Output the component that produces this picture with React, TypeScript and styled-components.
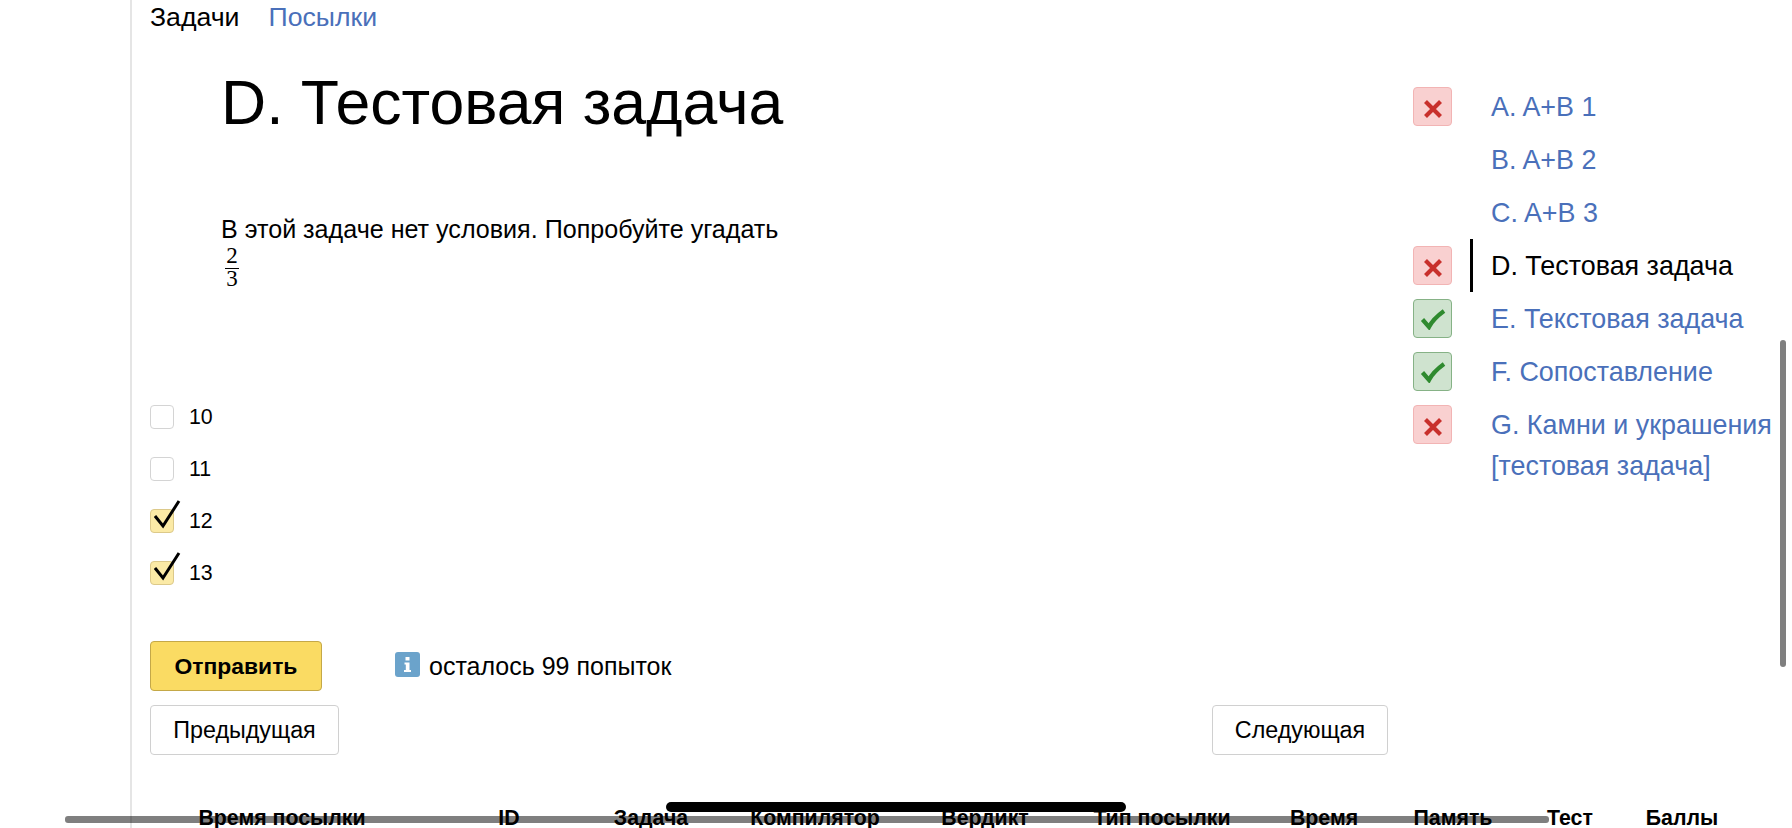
import styled, { createGlobalStyle } from "styled-components";

const Global = createGlobalStyle`
    html, body {
        margin: 0;
        background: #fff;
        color: #000;
        font-family: "Liberation Sans", Arial, sans-serif;
    }
`;

const Palette = {
    link: "#4a70ba",
    divider: "#e5e5e5",
    yellow: "#fadb63",
};

const Page = styled.div`
    position: relative;
    width: 1792px;
    height: 828px;
    overflow: hidden;
    box-sizing: border-box;
    padding-left: 130px;
`;

const Main = styled.div`
    height: 100%;
    border-left: 2px solid ${Palette.divider};
    padding-left: 18px;
    box-sizing: border-box;
`;

const Tabs = styled.nav`
    display: flex;
    gap: 29px;
    height: 34px;
    align-items: center;
    font-size: 26.67px;
`;

const Tab = styled.span<{ $active?: boolean }>`
    color: ${(p) => (p.$active ? "#000" : Palette.link)};
`;

const Content = styled.div`
    display: flex;
`;

const Left = styled.div`
    width: 1238px;
`;

const Title = styled.h1`
    margin: 31px 0 0 71px;
    font-size: 62.5px;
    line-height: 74px;
    font-weight: 400;
`;

const Statement = styled.div`
    margin: 76px 0 0 71px;
    font-size: 25.1px;
    line-height: 28px;
`;

const Fraction = styled.div`
    width: 14px;
    margin: 3px 0 0 4px;
    display: flex;
    flex-direction: column;
    align-items: center;
    font-family: "Liberation Serif", serif;
    font-size: 23px;
    line-height: 20px;
`;

const Numerator = styled.span`
    width: 100%;
    text-align: center;
    border-bottom: 1px solid #000;
    padding-bottom: 2px;
`;

const Options = styled.div`
    margin-top: 114px;
    display: flex;
    flex-direction: column;
    gap: 24px;
`;

const Option = styled.label`
    display: flex;
    align-items: center;
    gap: 15px;
    height: 28px;
    font-size: 21.33px;
`;

const Box = styled.span<{ $checked?: boolean }>`
    position: relative;
    width: 24px;
    height: 24px;
    box-sizing: border-box;
    border-radius: 4px;
    border: 1px solid ${(p) => (p.$checked ? "#dcc98a" : "#d4d4d4")};
    background: ${(p) => (p.$checked ? "#fbeaa6" : "#fff")};
`;

const Tick = styled.svg`
    position: absolute;
    left: 3px;
    top: -11px;
`;

const Actions = styled.div`
    margin-top: 54px;
    display: flex;
    align-items: center;
`;

const Submit = styled.button`
    width: 172px;
    height: 50px;
    padding: 0;
    border: 1px solid #c4a848;
    border-radius: 4px;
    background: ${Palette.yellow};
    color: #000;
    font: 700 22.86px "Liberation Sans", Arial, sans-serif;
`;

const Hint = styled.div`
    display: flex;
    align-items: center;
    gap: 9px;
    margin-left: 73px;
    font-size: 25px;
`;

const InfoIcon = styled.svg`
    display: block;
    margin-top: -3px;
`;

const Pager = styled.div`
    margin-top: 14px;
    display: flex;
    justify-content: space-between;
`;

const PagerButton = styled.button<{ $width: number }>`
    width: ${(p) => p.$width}px;
    height: 50px;
    padding: 0;
    background: #fff;
    color: #000;
    border: 1px solid #d0d0d0;
    border-radius: 4px;
    font: 400 23.3px "Liberation Sans", Arial, sans-serif;
`;

const Sidebar = styled.ul`
    list-style: none;
    margin: 46px 0 0 25px;
    padding: 0;
    width: 379px;
`;

const Problem = styled.li`
    display: flex;
`;

const StatusSlot = styled.div`
    flex: 0 0 39px;
    height: 53px;
    display: flex;
    align-items: center;
`;

const Status = styled.span<{ $ok: boolean }>`
    width: 39px;
    height: 39px;
    box-sizing: border-box;
    display: flex;
    align-items: center;
    justify-content: center;
    border-radius: 4px;
    border: 1px solid ${(p) => (p.$ok ? "#86b286" : "#f2b4b4")};
    background: ${(p) => (p.$ok ? "#cfe3cf" : "#f9d0d0")};
`;

const ProblemName = styled.div<{ $current?: boolean }>`
    margin-left: 18px;
    padding: 7px 0 5px 18px;
    border-left: 3px solid ${(p) => (p.$current ? "#000" : "transparent")};
    font-size: 26.9px;
    line-height: 41px;
    color: ${(p) => (p.$current ? "#000" : Palette.link)};
`;

const TableHead = styled.div`
    display: grid;
    grid-template-columns: 264px 190px 94px 234px 106px 248px 76px 182px 52px 172px;
    margin-top: 50px;
    font-size: 21.33px;
    font-weight: 700;
    line-height: 26px;
    text-align: center;
`;

const ScrollThumb = styled.div`
    position: absolute;
    background: rgba(0, 0, 0, 0.5);
    border-radius: 3px;
`;

const VerticalThumb = styled(ScrollThumb)`
    left: 1780px;
    top: 340px;
    width: 6px;
    height: 327px;
`;

const HorizontalThumb = styled(ScrollThumb)`
    left: 65px;
    top: 816px;
    width: 1484px;
    height: 7px;
`;

const HomeBar = styled.div`
    position: absolute;
    left: 666px;
    top: 802px;
    width: 460px;
    height: 10px;
    border-radius: 5px;
    background: #000;
`;

const problems = [
    { name: "A. A+B 1", status: "fail" },
    { name: "B. A+B 2" },
    { name: "C. A+B 3" },
    { name: "D. Тестовая задача", status: "fail", current: true },
    { name: "E. Текстовая задача", status: "ok" },
    { name: "F. Сопоставление", status: "ok" },
    { name: "G. Камни и украшения [тестовая задача]", status: "fail" },
];

const options = [
    { label: "10", checked: false },
    { label: "11", checked: false },
    { label: "12", checked: true },
    { label: "13", checked: true },
];

const columns = ["Время посылки", "ID", "Задача", "Компилятор", "Вердикт", "Тип посылки", "Время", "Память", "Тест", "Баллы"];

const StatusMark = ({ ok }: { ok: boolean }) => (
    <Status $ok={ok}>
        {ok ? (
            <svg width="26" height="22" viewBox="0 0 26 22">
                <path d="M2.5 11.5 L9 19 Q13 11 24 3" fill="none" stroke="#2f8a2f" strokeWidth="4.2" />
            </svg>
        ) : (
            <svg width="20" height="24" viewBox="0 0 20 24">
                <path d="M2.5 6.5 L17.5 21.5 M17.5 6.5 L2.5 21.5" fill="none" stroke="#c8302c" strokeWidth="4.2" />
            </svg>
        )}
    </Status>
);

export default function App() {
    return (
        <Page>
            <Global />
            <Main>
                <Tabs>
                    <Tab $active>Задачи</Tab>
                    <Tab>Посылки</Tab>
                </Tabs>
                <Content>
                    <Left>
                        <Title>D. Тестовая задача</Title>
                        <Statement>
                            В этой задаче нет условия. Попробуйте угадать
                            <Fraction>
                                <Numerator>2</Numerator>
                                <span>3</span>
                            </Fraction>
                        </Statement>
                        <Options>
                            {options.map((o) => (
                                <Option key={o.label}>
                                    <Box $checked={o.checked}>
                                        {o.checked && (
                                            <Tick width="28" height="32" viewBox="0 0 28 32">
                                                <path d="M1 17 L9 27 L25 2" fill="none" stroke="#000" strokeWidth="3" />
                                            </Tick>
                                        )}
                                    </Box>
                                    {o.label}
                                </Option>
                            ))}
                        </Options>
                        <Actions>
                            <Submit>Отправить</Submit>
                            <Hint>
                                <InfoIcon width="25" height="25" viewBox="0 0 25 25">
                                    <rect width="25" height="25" rx="3" fill="#6ba3cb" />
                                    <rect x="10.5" y="5" width="4" height="3.5" fill="#fff" />
                                    <path d="M9.5 10.5 H14.5 V18 H16 V20 H9 V18 H10.8 V12.5 H9.5 Z" fill="#fff" />
                                </InfoIcon>
                                осталось 99 попыток
                            </Hint>
                        </Actions>
                        <Pager>
                            <PagerButton $width={189}>Предыдущая</PagerButton>
                            <PagerButton $width={176}>Следующая</PagerButton>
                        </Pager>
                    </Left>
                    <Sidebar>
                        {problems.map((p) => (
                            <Problem key={p.name}>
                                <StatusSlot>{p.status && <StatusMark ok={p.status === "ok"} />}</StatusSlot>
                                <ProblemName $current={p.current}>{p.name}</ProblemName>
                            </Problem>
                        ))}
                    </Sidebar>
                </Content>
                <TableHead>
                    {columns.map((c, i) => (
                        <span key={i}>{c}</span>
                    ))}
                </TableHead>
            </Main>
            <VerticalThumb />
            <HorizontalThumb />
            <HomeBar />
        </Page>
    );
}
